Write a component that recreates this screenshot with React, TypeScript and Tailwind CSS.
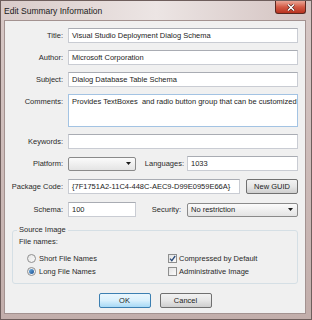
import React from "react";

function TextBox({ value, className = "" }: { value?: string; className?: string }) {
  return (
    <div
      className={`flex h-[15px] items-center overflow-hidden whitespace-nowrap border border-[#c9ccd3] border-t-[#a9acb3] bg-white pl-[3px] text-[#1c1c1c] ${className}`}
    >
      {value}
    </div>
  );
}

function Combo({ value, className = "" }: { value?: string; className?: string }) {
  return (
    <div
      className={`flex h-[14px] items-center justify-between rounded-[2px] border border-[#8a8a8a] bg-gradient-to-b from-[#fbfbfb] to-[#e4e4e4] pl-[3px] pr-[4px] text-[#1c1c1c] ${className}`}
    >
      <span>{value}</span>
      <svg width="5" height="3" viewBox="0 0 5 3">
        <path d="M0 0H5L2.5 3Z" fill="#1a1a1a" />
      </svg>
    </div>
  );
}

function Button({ label, primary, className = "" }: { label: string; primary?: boolean; className?: string }) {
  return (
    <div
      className={`flex h-[15px] items-center justify-center rounded-[2px] border text-[#1c1c1c] ${
        primary
          ? "border-[#3c7fb1] bg-gradient-to-b from-[#eaf6fd] via-[#d9f0fc] to-[#a7d9f5]"
          : "border-[#707070] bg-gradient-to-b from-[#f2f2f2] via-[#e6e6e6] to-[#cfcfcf]"
      } ${className}`}
    >
      {label}
    </div>
  );
}

function Field({ label, children, className = "" }: { label: string; children: React.ReactNode; className?: string }) {
  return (
    <div className={`flex items-center pr-[7px] ${className}`}>
      <span className="w-[59px] shrink-0 pr-[1px] text-right text-[#2a2a2a]">{label}</span>
      <div className="ml-[4px] flex flex-1 items-center">{children}</div>
    </div>
  );
}

function Radio({ checked }: { checked?: boolean }) {
  return (
    <span className="flex h-[9px] w-[9px] items-center justify-center rounded-full border border-[#8f8f8f] bg-gradient-to-br from-[#e6e6e6] to-[#fafafa]">
      {checked && <span className="h-[5px] w-[5px] rounded-full bg-gradient-to-br from-[#6fb3e8] to-[#1c4f8f]" />}
    </span>
  );
}

function Check({ checked }: { checked?: boolean }) {
  return (
    <span className="flex h-[9px] w-[9px] items-center justify-center border border-[#8e8f8f] bg-gradient-to-br from-[#e2e2e2] to-[#fbfbfb]">
      {checked && (
        <svg width="7" height="7" viewBox="0 0 7 7">
          <path d="M1 3.6L2.8 5.6L6.2 1" stroke="#2a4a7a" strokeWidth="1.3" fill="none" />
        </svg>
      )}
    </span>
  );
}

export default function App() {
  return (
    <div
      className="flex h-[320px] w-[312px] flex-col border border-[#6e5e5c] bg-gradient-to-b from-[#d7c8c6] to-[#c2aeab] text-[7.5px] leading-[10px]"
      style={{ fontFamily: "'Liberation Sans', Arial, sans-serif" }}
    >
      {/* title bar */}
      <div className="flex h-[19px] items-start justify-between bg-gradient-to-r from-[#d9cbc9] via-[#ece5e4] to-[#d3c2c0] pl-[3px] pr-[5px]">
        <span className="mt-[5px] text-[8.5px] leading-[10px] text-[#1a1a1a]">Edit Summary Information</span>
        <div className="flex h-[13px] w-[31px] items-center justify-center rounded-b-[3px] border border-t-0 border-[#5b2820] bg-gradient-to-b from-[#e9a596] via-[#d35a45] to-[#b8321f]">
          <svg width="8" height="7" viewBox="0 0 8 7">
            <path d="M1 0.5L7 6.5M7 0.5L1 6.5" stroke="#4a1a14" strokeWidth="2.6" />
            <path d="M1 0.5L7 6.5M7 0.5L1 6.5" stroke="#ffffff" strokeWidth="1.5" />
          </svg>
        </div>
      </div>

      {/* client area */}
      <div className="mb-[5px] ml-[3px] mr-[5px] flex flex-1 flex-col border border-[#a39290] bg-[#f0f0f0] pt-[7px]">
        <Field label="Title:">
          <TextBox value="Visual Studio Deployment Dialog Schema" className="flex-1" />
        </Field>
        <Field label="Author:" className="mt-[7px]">
          <TextBox value="Microsoft Corporation" className="flex-1" />
        </Field>
        <Field label="Subject:" className="mt-[7px]">
          <TextBox value="Dialog Database Table Schema" className="flex-1" />
        </Field>
        <div className="mt-[7px] flex items-start pr-[7px]">
          <span className="mt-[3px] w-[59px] shrink-0 pr-[1px] text-right text-[#2a2a2a]">Comments:</span>
          <div className="ml-[4px] h-[33px] flex-1 overflow-hidden whitespace-nowrap border border-[#a3c3e3] bg-white pl-[3px] pt-[2px] text-[#1c1c1c]">
            Provides TextBoxes&nbsp; and radio button group that can be customized
          </div>
        </div>
        <Field label="Keywords:" className="mt-[7px]">
          <TextBox className="flex-1" />
        </Field>
        <Field label="Platform:" className="mt-[7px]">
          <Combo className="w-[68px]" />
          <span className="w-[51px] pr-[3px] text-right text-[#2a2a2a]">Languages:</span>
          <TextBox value="1033" className="flex-1" />
        </Field>
        <Field label="Package Code:" className="mt-[8px]">
          <TextBox value="{7F1751A2-11C4-448C-AEC9-D99E0959E66A}" className="w-[172px]" />
          <Button label="New GUID" className="ml-[6px] w-[52px]" />
        </Field>
        <Field label="Schema:" className="mt-[8px]">
          <TextBox value="100" className="w-[68px]" />
          <span className="w-[51px] pr-[6px] text-right text-[#2a2a2a]">Security:</span>
          <Combo value="No restriction" className="flex-1" />
        </Field>

        <fieldset className="mx-[7px] mt-[8px] rounded-[3px] border border-[#d5dfe5] px-[4px] pb-[5px]">
          <legend className="px-[2px] text-[#2a2a2a]">Source Image</legend>
          <div className="ml-[2px] mt-[2px] text-[#2a2a2a]">File names:</div>
          <div className="mt-[5px] grid grid-cols-[151px_1fr] text-[#2a2a2a]">
            <div className="flex h-[13px] items-center gap-[3px] pl-[10px]">
              <Radio />
              <span>Short File Names</span>
            </div>
            <div className="flex h-[13px] items-center gap-[2px]">
              <Check checked />
              <span>Compressed by Default</span>
            </div>
            <div className="flex h-[13px] items-center gap-[3px] pl-[10px]">
              <Radio checked />
              <span>Long File Names</span>
            </div>
            <div className="flex h-[13px] items-center gap-[2px]">
              <Check />
              <span>Administrative Image</span>
            </div>
          </div>
        </fieldset>

        <div className="mt-[9px] flex justify-center gap-[9px]">
          <Button label="OK" primary className="w-[52px]" />
          <Button label="Cancel" className="w-[52px]" />
        </div>
      </div>
    </div>
  );
}
